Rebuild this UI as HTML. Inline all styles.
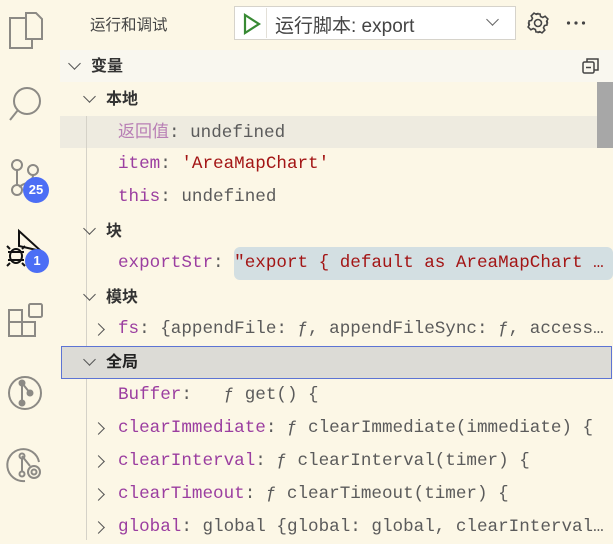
<!DOCTYPE html>
<html><head><meta charset="utf-8"><style>
*{margin:0;padding:0;box-sizing:border-box}
body{width:613px;height:540px;overflow:hidden;background:#fcf7e6;position:relative;font-family:"Liberation Sans","Noto Sans CJK SC",sans-serif}
.a{position:absolute}
.row{position:absolute;left:60px;right:0;height:33px;line-height:33px;white-space:pre;font-family:"Liberation Mono","Noto Sans CJK SC",monospace;font-size:17.6px;color:#5b5b5b}
.h{font-family:"Liberation Sans","Noto Sans CJK SC",sans-serif;font-weight:bold;font-size:16px;color:#333}
.k{color:#9b3ea0}.s{color:#a31515}
.chev{position:absolute;width:9px;height:9px;border-right:1.6px solid #555;border-bottom:1.6px solid #555}
.dn{transform:rotate(45deg)}.rt{transform:rotate(-45deg)}
.badge{position:absolute;background:#4c6ef5;color:#fff;font-weight:bold;font-size:13px;border-radius:50%;text-align:center}
</style></head><body>
<svg class="a" style="left:0;top:0" width="60" height="540" fill="none" stroke="#8c8a85" stroke-width="2">
<path d="M16 18h10v-5h10l6 6v20h-10v9H10V18z M26 13v26h16"/>
<circle cx="27" cy="101" r="13"/><path d="M18 110 10 120"/>
<circle cx="17" cy="165" r="5"/><circle cx="33" cy="170" r="5"/><circle cx="17" cy="190" r="5"/><path d="M17 170v15M33 175c0 8-10 8-14 12"/>
<path d="M9 310h13v12h13v14H9zM9 322h13v14"/><rect x="29" y="304" width="13" height="13" rx="1.5"/>
<circle cx="25" cy="393" r="16"/><circle cx="22" cy="383" r="2.5" fill="#8c8a85"/><circle cx="22" cy="403" r="2.5" fill="#8c8a85"/><circle cx="30" cy="393" r="2.5" fill="#8c8a85"/><path d="M22 383v20M22 383l8 10"/>
<path d="M39 462a16 16 0 1 0-14 19"/><circle cx="22" cy="456" r="2.5"/><circle cx="22" cy="474" r="2.5"/><path d="M22 458v14M22 456l8 10"/><circle cx="34" cy="472" r="6"/><circle cx="34" cy="472" r="2.5"/>
</svg>
<svg class="a" style="left:0;top:225" width="60" height="50" fill="none" stroke="#111" stroke-width="2"><path d="M19 6v15l22 5z"/><ellipse cx="16" cy="31" rx="6" ry="7"/><path d="M8 27h16M8 35h16M10 24l-3-3M22 24l3-3M10 38l-3 3M22 38l3 3"/></svg>
<div class="badge" style="left:23px;top:177px;width:26px;height:26px;line-height:26px">25</div>
<div class="badge" style="left:25px;top:249px;width:24px;height:24px;line-height:24px">1</div>
<div class="a" style="left:90px;top:13px;font-size:15.5px;color:#444">运行和调试</div>
<div class="a" style="left:234px;top:6px;width:282px;height:34px;background:#fff;border:1px solid #d6d3cb"></div>
<svg class="a" style="left:240px;top:12px" width="24" height="24"><path d="M5 3v18l14-9z" fill="none" stroke="#388a34" stroke-width="2.2"/></svg>
<div class="a" style="left:266px;top:8px;width:1px;height:30px;background:#e3e0d8"></div>
<div class="a" style="left:275px;top:11px;font-size:19px;color:#444">运行脚本: export</div>
<div class="chev dn a" style="left:488px;top:15px;border-color:#666"></div>
<svg class="a" style="left:526px;top:11px" width="24" height="24" fill="none" stroke="#444" stroke-width="1.6"><circle cx="12" cy="12" r="3.5"/><path d="M10 3h4l.6 2.5 2.2 1 2.3-1.3 2.8 2.8-1.3 2.3 1 2.2L21 10v4l-2.5.6-1 2.2 1.3 2.3-2.8 2.8-2.3-1.3-2.2 1L14 21h-4l-.6-2.5-2.2-1-2.3 1.3-2.8-2.8 1.3-2.3-1-2.2L3 14v-4l2.5-.6 1-2.2-1.3-2.3 2.8-2.8 2.3 1.3 2.2-1z"/></svg>
<svg class="a" style="left:566px;top:20px" width="22" height="6" fill="#444"><circle cx="2.5" cy="3" r="1.6"/><circle cx="10" cy="3" r="1.6"/><circle cx="17.5" cy="3" r="1.6"/></svg>
<div class="a" style="left:60px;top:50px;width:553px;height:32px;background:#f9f7ef"></div>
<svg class="a" style="left:581px;top:56px" width="20" height="20" fill="none" stroke="#444" stroke-width="1.5"><rect x="2" y="6" width="11" height="11" rx="1.5"/><path d="M6 6V3h11v11h-4M5 11.5h5"/></svg>
<div class="a" style="left:60px;top:116px;width:540px;height:32px;background:#eeebe0"></div>
<div class="a" style="left:597px;top:82px;width:16px;height:66px;background:#a7a7a7"></div>
<div class="a" style="left:86px;top:116px;width:1px;height:424px;background:#d5d2c8"></div>
<div class="a" style="left:234px;top:247px;width:379px;height:33px;background:#d3dfe2;border-radius:6px"></div>
<div class="a" style="left:61px;top:346px;width:551px;height:33px;background:#dcdbd6;border:1px solid #5d74d4"></div>

<div class="row" style="top:50px"><span class="chev dn" style="left:10px;top:9px"></span><span class="h" style="position:absolute;left:31px">变量</span></div>
<div class="row" style="top:83px"><span class="chev dn" style="left:25px;top:9px"></span><span class="h" style="position:absolute;left:46px">本地</span></div>
<div class="row" style="top:115px"><span style="position:absolute;left:58px"><span style="color:#b87fb5;font-family:'Liberation Sans','Noto Sans CJK SC',sans-serif;font-size:17px">返回值</span>: undefined</span></div>
<div class="row" style="top:148px"><span style="position:absolute;left:58px"><span class="k">item</span>: <span class="s">'AreaMapChart'</span></span></div>
<div class="row" style="top:181px"><span style="position:absolute;left:58px"><span class="k">this</span>: undefined</span></div>
<div class="row" style="top:215px"><span class="chev dn" style="left:25px;top:9px"></span><span class="h" style="position:absolute;left:46px">块</span></div>
<div class="row" style="top:247px"><span style="position:absolute;left:58px"><span class="k">exportStr</span>: <span class="s">"export { default as AreaMapChart …</span></span></div>
<div class="row" style="top:281px"><span class="chev dn" style="left:25px;top:9px"></span><span class="h" style="position:absolute;left:46px">模块</span></div>
<div class="row" style="top:313px"><span class="chev rt" style="left:34px;top:12px"></span><span style="position:absolute;left:58px"><span class="k">fs</span>: {appendFile: ƒ, appendFileSync: ƒ, access…</span></div>
<div class="row" style="top:346px"><span class="chev dn" style="left:25px;top:9px"></span><span class="h" style="position:absolute;left:46px;color:#222">全局</span></div>
<div class="row" style="top:379px"><span style="position:absolute;left:58px"><span class="k">Buffer</span>:   ƒ get() {</span></div>
<div class="row" style="top:412px"><span class="chev rt" style="left:34px;top:12px"></span><span style="position:absolute;left:58px"><span class="k">clearImmediate</span>: ƒ clearImmediate(immediate) {</span></div>
<div class="row" style="top:445px"><span class="chev rt" style="left:34px;top:12px"></span><span style="position:absolute;left:58px"><span class="k">clearInterval</span>: ƒ clearInterval(timer) {</span></div>
<div class="row" style="top:478px"><span class="chev rt" style="left:34px;top:12px"></span><span style="position:absolute;left:58px"><span class="k">clearTimeout</span>: ƒ clearTimeout(timer) {</span></div>
<div class="row" style="top:511px"><span class="chev rt" style="left:34px;top:12px"></span><span style="position:absolute;left:58px"><span class="k">global</span>: global {global: global, clearInterval…</span></div>
</body></html>
